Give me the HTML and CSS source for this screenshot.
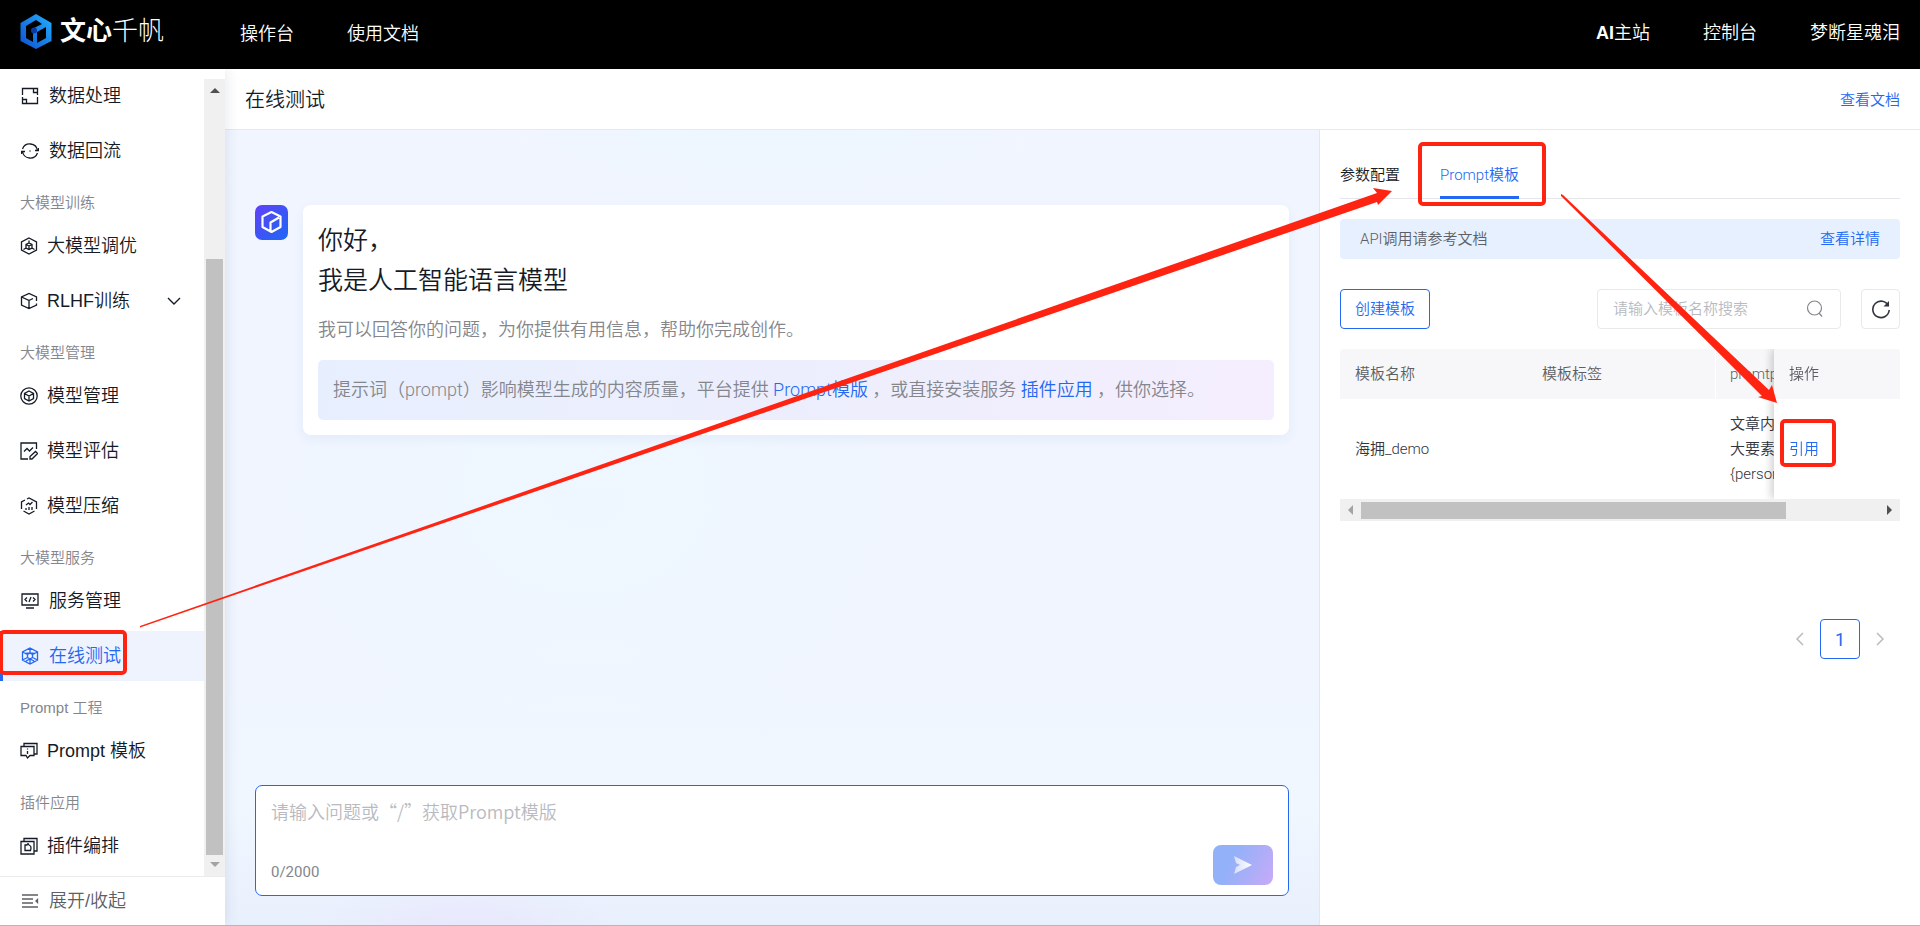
FILE: index.html
```html
<!DOCTYPE html>
<html lang="zh-CN">
<head>
<meta charset="utf-8">
<title>文心千帆 - 在线测试</title>
<link rel="stylesheet" href="styles.css">
</head>
<body>
<div class="page">
  <header class="topbar">
    <a class="brand" href="#">
      <svg class="brand-mark" width="32" height="36" viewBox="0 0 32 36">
        <defs><linearGradient id="g1" x1="1" y1="0" x2="0" y2="1"><stop offset="0" stop-color="#25b0ff"/><stop offset="1" stop-color="#0c4fd0"/></linearGradient></defs>
        <path fill="url(#g1)" fill-rule="evenodd" d="M16 0 31.500 9V27L16 35 .500 27V9ZM16 6 6 12V24L13 28V17Q13 14 16 13L22 10ZM26 13 17 18V29L26 24Z"/>
        <circle cx="14" cy="16.500" r="3" fill="#0a3aa0"/>
      </svg>
      <span class="brand-name"><b>文心</b>千帆</span>
    </a>
    <nav class="topnav"><a href="#">操作台</a><a href="#">使用文档</a></nav>
    <nav class="topnav topnav-right"><a href="#"><b>AI</b>主站</a><a href="#">控制台</a><a href="#">梦断星魂泪</a></nav>
  </header>

  <div class="body">
    <aside class="sidebar">
      <div class="side-scroll">
        <nav class="menu">
          <a class="item wide" href="#"><svg class="ico" viewBox="0 0 18 18"><path d="M12 1.500H1.500V8M1.500 10v2M6 16.500H16.500V10M16.500 8V6M12.500 1.500h4v4h-4ZM1.500 12.500h4v4h-4Z"/></svg>数据处理</a>
          <a class="item wide" href="#"><svg class="ico" viewBox="0 0 18 18"><path d="M1.500 7A7.800 7.800 0 0 1 16.500 8.500M14 8.500h3.500V6M16.500 11A7.800 7.800 0 0 1 1.500 9.500M4 9.500H.500V12M8.500 9h1"/></svg>数据回流</a>
          <h2 class="group">大模型训练</h2>
          <a class="item" href="#"><svg class="ico" viewBox="0 0 18 18"><path d="M9 1 16.500 5V13L9 17 1.500 13V5ZM9 6 12 7.500V11L9 12.500 6 11V7.500ZM6 7.500 9 9 12 7.500M9 9v3.500M9 3.500V6M6 11 3.500 12.500M12 11 14.500 12.500"/></svg>大模型调优</a>
          <a class="item" href="#"><svg class="ico" viewBox="0 0 18 18"><path d="M16.500 9V5L9 1.500 1.500 5V13L9 16.500 16.500 13V11.500M1.500 5 9 8.500V16.500M9 8.500 13 6.500"/></svg>RLHF训练<svg class="caret" viewBox="0 0 14 8"><path d="M1 1 7 7 13 1"/></svg></a>
          <h2 class="group">大模型管理</h2>
          <a class="item" href="#"><svg class="ico" viewBox="0 0 18 18"><circle cx="9" cy="9" r="8.200"/><path d="M9 4 13.500 6.500V11.500L9 14 4.500 11.500V6.500ZM4.500 6.500 9 9 13.500 6.500M9 9V14"/></svg>模型管理</a>
          <a class="item" href="#"><svg class="ico" viewBox="0 0 18 18"><path d="M8 17H1V1H16.500V7M4 9.500 7 6.500 9.500 9 13 5.500M10 17V14.500L15.500 9.500 17.500 11.500 12 17Z"/></svg>模型评估</a>
          <a class="item" href="#"><svg class="ico" viewBox="0 0 18 18"><path d="M7 2 9 1 16.500 5V12M14.500 14 9 17 3.500 14M1.500 12V5L5 3M6 13V11M9 13V10M12 13V10M6 8 8.500 6 10 7.500 12.500 5"/></svg>模型压缩</a>
          <h2 class="group">大模型服务</h2>
          <a class="item wide" href="#"><svg class="ico" viewBox="0 0 18 18"><path d="M1 2H17V13H1ZM5 16H13M6 5.500 4 7.500 6 9.500M12 5.500 14 7.500 12 9.500M10 5 8 10"/></svg>服务管理</a>
          <a class="item wide active" href="#"><svg class="ico" viewBox="0 0 18 18"><path d="M9 1 16.500 5V13L9 17 1.500 13V5ZM9 1V6M1.500 5 6.500 7.500M16.500 5 11.500 7.500M1.500 13 6.500 10.500M16.500 13 11.500 10.500M9 12V17M9 6 11.500 7.500V10.500L9 12 6.500 10.500V7.500ZM4 6.500 9 6 14 6.500M5 14 9 12 13 14"/></svg>在线测试</a>
          <h2 class="group">Prompt 工程</h2>
          <a class="item" href="#"><svg class="ico" viewBox="0 0 18 18"><path d="M4 4V1.500H17V12H14.500M1 4.500H14V13.500H10L7.500 16 6 13.500H1ZM7.500 6.500v1M7.500 9v3"/></svg>Prompt 模板</a>
          <h2 class="group">插件应用</h2>
          <a class="item" href="#"><svg class="ico" viewBox="0 0 18 18"><path d="M4 4V1.500H17V14H14.500M1 4.500H14V17H1ZM5 13.500V8H7Q8 5.500 9 8Q12 9 10.500 13.500Z"/></svg>插件编排</a>
        </nav>
        <div class="vbar"><i class="tri up"></i><div class="vthumb"></div><i class="tri down"></i></div>
      </div>
      <button class="collapse" type="button"><svg class="ico" viewBox="0 0 18 18"><path d="M1 3H17M1 7H12M1 11H12M1 15H17M16.500 7.500 15 9 16.500 10.500Z"/></svg>展开/收起</button>
    </aside>

    <main class="main">
      <div class="titlebar"><h1>在线测试</h1><a href="#">查看文档</a></div>
      <div class="content">
        <section class="chat">
          <div class="message">
            <svg class="avatar" width="33" height="35" viewBox="0 0 33 35">
              <defs><linearGradient id="g2" x1="0" y1="0" x2="1" y2="1"><stop offset="0" stop-color="#6040f8"/><stop offset="1" stop-color="#1c68f4"/></linearGradient></defs>
              <rect width="33" height="35" rx="7" fill="url(#g2)"/>
              <path d="M16.500 7 25.500 11.500V22L16.500 27 7.500 22V11.500ZM15.500 26V17.500L24 12.500" fill="none" stroke="#fff" stroke-width="2.200" stroke-linejoin="round"/>
            </svg>
            <div class="card">
              <p class="hello">你好，<br>我是人工智能语言模型</p>
              <p class="sub">我可以回答你的问题，为你提供有用信息，帮助你完成创作。</p>
              <p class="tip">提示词（prompt）影响模型生成的内容质量，平台提供 <a href="#">Prompt模版</a> ，或直接安装服务 <a href="#">插件应用</a> ，供你选择。</p>
            </div>
          </div>
          <form class="composer">
            <textarea aria-label="问题" placeholder="请输入问题或“/”获取Prompt模版"></textarea>
            <div class="composer-foot">
              <span>0/2000</span>
              <button class="send" type="button" aria-label="发送"><svg width="20" height="18" viewBox="0 0 20 18"><defs><linearGradient id="g3"><stop offset="0" stop-color="#d6defa"/><stop offset="1" stop-color="#fff"/></linearGradient></defs><path fill="url(#g3)" d="M1 0 19 9 1 18 3 11 7 9 3 7Z"/></svg></button>
            </div>
          </form>
        </section>

        <section class="panel">
          <div class="tabs" role="tablist">
            <button role="tab" type="button">参数配置</button>
            <button role="tab" type="button" class="on" aria-selected="true">Prompt模板</button>
          </div>
          <div class="notice"><span>API调用请参考文档</span><a href="#">查看详情</a></div>
          <div class="tools">
            <button class="create" type="button">创建模板</button>
            <label class="search">
              <input type="text" aria-label="模板名称" placeholder="请输入模板名称搜索">
              <svg width="18" height="18" viewBox="0 0 18 18"><circle cx="8.500" cy="8" r="7"/><path d="M13 13 16 16.500"/></svg>
            </label>
            <button class="refresh" type="button" aria-label="刷新"><svg width="20" height="20" viewBox="0 0 20 20"><path d="M17.500 7A8.200 8.200 0 1 0 18.200 11"/><path d="M18 2V7.500H12.500Z" class="solid"/></svg></button>
          </div>
          <div class="table-wrap">
            <table>
              <colgroup><col class="c1"><col class="c2"><col class="c3"><col class="c4"></colgroup>
              <thead><tr><th>模板名称</th><th>模板标签</th><th class="split">promtp</th><th class="fixed">操作</th></tr></thead>
              <tbody><tr><td>海拥_demo</td><td></td><td class="long">文章内<br>大要素<br>{person</td><td class="fixed"><a href="#">引用</a></td></tr></tbody>
            </table>
          </div>
          <div class="hbar"><i class="tri left"></i><div class="htrack"><div class="hthumb"></div></div><i class="tri right"></i></div>
          <nav class="pager" aria-label="分页">
            <button type="button" aria-label="上一页"><svg width="8" height="14" viewBox="0 0 8 14"><path d="M7 1 1 7 7 13"/></svg></button>
            <button type="button" class="current">1</button>
            <button type="button" aria-label="下一页"><svg width="8" height="14" viewBox="0 0 8 14"><path d="M1 1 7 7 1 13"/></svg></button>
          </nav>
        </section>
      </div>
    </main>
  </div>

  <svg class="marks" width="1920" height="926" viewBox="0 0 1920 926" aria-hidden="true">
    <g fill="none" stroke="#ff2412" stroke-width="4">
      <rect x="1" y="632" width="124" height="41" rx="3"/>
      <rect x="1420" y="144" width="124" height="60" rx="3"/>
      <rect x="1782" y="421" width="52" height="44" rx="3"/>
    </g>
    <g fill="#ff2412">
      <path d="M140 626 1377 193 1373 188 1392 191 1378 205 1377 202 140 627.500Z"/>
      <path d="M1561 194 1563 195 1769 390 1772 385 1777 403 1758 397 1762 396 1561 196Z"/>
    </g>
  </svg>
</div>
</body>
</html>
```
FILE: styles.css
```css
* { box-sizing: border-box; }
body {
  margin: 0;
  font-family: Roboto, "Noto Sans CJK SC", sans-serif;
  font-size: 15px;
  font-weight: 350;
  line-height: 25px;
  color: #151b26;
  background: #fff;
}
a { color: #2468f2; text-decoration: none; }
h1, h2, p { margin: 0; font-weight: inherit; }
button, input, textarea { font: inherit; color: inherit; background: none; border: 0; padding: 0; }
svg { fill: none; flex: none; display: block; }

.page {
  position: relative;
  display: flex;
  flex-direction: column;
  min-height: 100vh;
  overflow: hidden;
  border-bottom: 1px solid #b4b8be;
}

.topbar {
  display: flex;
  align-items: center;
  height: 69px;
  padding: 0 20px;
  background: #000;
  font-size: 18px;
}
.brand { display: flex; align-items: center; gap: 8px; width: 220px; padding-bottom: 6px; }
.brand-name { padding-bottom: 2px; color: #fff; font-size: 26px; line-height: 30px; font-weight: 300; }
.brand-name b { font-weight: 700; }
.topnav { display: flex; gap: 53px; padding-bottom: 3px; }
.topnav a { color: #fff; }
.topnav-right { margin-left: auto; }
.topnav b { font-family: "Liberation Sans", sans-serif; }

.body { flex: 1; display: flex; }

.sidebar {
  position: relative;
  z-index: 1;
  display: flex;
  flex-direction: column;
  width: 225px;
  flex: none;
  background: #fff;
  box-shadow: 0 0 14px rgba(20, 40, 90, .12);
  clip-path: inset(0 -20px 0 0);
  font-family: "Liberation Sans", "Noto Sans CJK SC", sans-serif;
  font-size: 18px;
}
.side-scroll { flex: 1; display: flex; }
.menu { flex: 1; display: flex; flex-direction: column; gap: 5px; padding: 2px 0 5px; }
.item { display: flex; align-items: center; gap: 9px; height: 50px; padding: 0 23px 0 20px; color: #151b26; }
.item.wide { gap: 10px; padding-left: 21px; }
.item.active { color: #2468f2; background: #eef3fe; box-shadow: inset 3px 0 #2468f2; }
.group { height: 35px; padding: 9px 20px 0; font-size: 15px; color: #84868c; }
.ico { width: 18px; height: 18px; stroke: currentColor; stroke-width: 1.3; }
.caret { width: 14px; height: 8px; margin-left: auto; stroke: currentColor; stroke-width: 1.4; }
.collapse {
  display: flex;
  align-items: center;
  gap: 10px;
  height: 49px;
  padding: 0 21px;
  border-top: 1px solid #ebecee;
  color: #5c5f66;
}

.vbar { display: flex; flex-direction: column; align-items: center; justify-content: space-between; width: 21px; margin-top: 10px; padding: 9px 0; background: #f0f0f0; }
.vthumb { width: 17px; flex: 1; margin: 166px 0 7px; background: #c1c1c1; }
.tri { border: 5px solid transparent; width: 0; height: 0; flex: none; }
.tri.up { border-top: 0; border-bottom-color: #505050; }
.tri.down { border-bottom: 0; border-top-color: #a3a3a3; }
.tri.left { border-left: 0; border-right-color: #a3a3a3; }
.tri.right { border-right: 0; border-left-color: #505050; }

.main { flex: 1; min-width: 0; display: flex; flex-direction: column; }
.titlebar {
  display: flex;
  align-items: center;
  justify-content: space-between;
  height: 61px;
  padding: 2px 20px 0;
  border-bottom: 1px solid #e8e9eb;
}
.titlebar h1 { font-size: 20px; }
.content { flex: 1; display: flex; }

.chat {
  flex: 1;
  display: flex;
  flex-direction: column;
  justify-content: space-between;
  padding: 75px 30px 29px;
  background:
    radial-gradient(320px 260px at 33% 46%, rgba(236, 249, 255, .5), transparent),
    radial-gradient(300px 80px at 50% 0, rgba(234, 248, 255, .6), transparent),
    radial-gradient(160px 50px at 22% 100%, rgba(232, 230, 252, .8), transparent),
    linear-gradient(#f1f5ff 0, #f0f5ff 60%, #f0f7ff 85%, #e9f0fd);
}
.message { display: flex; gap: 15px; }
.card { flex: 1; padding: 16px 15px 15px; border-radius: 8px; background: #fff; box-shadow: 0 4px 12px rgba(40, 80, 160, .06); }
.hello { font-size: 25px; line-height: 40px; }
.sub { margin: 14px 0 15px; font-size: 18px; line-height: 30px; color: #84868c; }
.tip {
  padding: 15px;
  border-radius: 5px;
  font-size: 18px;
  line-height: 30px;
  color: #84868c;
  background: linear-gradient(100deg, #e7effe, #edeefd 50%, #f5eefe);
}

.composer { display: flex; flex-direction: column; height: 111px; padding: 10px 15px; border: 1px solid #2468f2; border-radius: 7px; background: #fff; }
.composer textarea { flex: 1; min-height: 0; resize: none; outline: 0; font-family: "Noto Sans CJK SC", sans-serif; font-size: 18px; line-height: 30px; overflow: hidden; }
::placeholder { color: #b8babf; opacity: 1; }
.composer-foot { display: flex; justify-content: space-between; align-items: flex-end; color: #84868c; }
.composer-foot span { font-weight: 400; }
.send {
  display: grid;
  place-items: center;
  width: 60px;
  height: 40px;
  border-radius: 8px;
  background: linear-gradient(115deg, #92b1f9 30%, #a8aef7 60%, #c8aaf8);
}

.panel { width: 601px; padding: 20px; border-left: 1px solid #e4e6eb; }
.tabs { display: flex; gap: 40px; height: 49px; border-bottom: 1px solid #e4e6eb; }
.tabs button { height: 49px; padding-top: 4px; border-bottom: 3px solid transparent; }
.tabs .on { color: #2468f2; border-color: #2468f2; }
.notice {
  display: flex;
  align-items: center;
  justify-content: space-between;
  height: 40px;
  margin: 20px 0 30px;
  padding: 0 20px;
  border-radius: 4px;
  background: #e6f0ff;
  color: #5c5f66;
}
.tools { display: flex; gap: 20px; margin-bottom: 20px; }
.tools > * { height: 40px; border: 1px solid #e8e9eb; border-radius: 4px; }
.tools .create { width: 90px; margin-right: auto; color: #2468f2; border-color: #2468f2; }
.search { display: flex; align-items: center; width: 244px; padding: 0 16px 0 15px; }
.search input { flex: 1; min-width: 0; outline: 0; }
.search svg { stroke: #84868c; stroke-width: 1.2; }
.refresh { display: grid; place-items: center; width: 39px; }
.refresh svg { stroke: #303540; stroke-width: 1.6; }
.refresh .solid { fill: #303540; stroke: none; }

.table-wrap { overflow: hidden; border-radius: 4px 4px 0 0; }
table { width: 688px; table-layout: fixed; border-collapse: separate; border-spacing: 0; }
.c1, .c3 { width: 187px; }
.c2 { width: 188px; }
.c4 { width: 126px; }
th, td { padding: 0 15px; text-align: left; font-weight: inherit; }
th { height: 50px; background: #f7f7f9; color: #5c5f66; }
th.split { border-left: 1px solid #fff; padding-left: 14px; }
td { height: 100px; background: #fff; color: #303540; }
td.long { white-space: nowrap; }
.fixed { position: sticky; right: 0; box-shadow: -3px 0 8px rgba(0, 0, 0, .18); clip-path: inset(0 0 0 -12px); }

.hbar { display: flex; align-items: center; height: 22px; padding: 0 8px; background: #f0f0f0; }
.htrack { flex: 1; padding: 0 8px; }
.hthumb { width: 82%; height: 17px; background: #c1c1c1; }

.pager { display: flex; justify-content: flex-end; align-items: center; margin-top: 98px; }
.pager svg { stroke: #b8babf; stroke-width: 1.5; margin: 0 16px; }
.pager .current { width: 40px; height: 40px; border: 1px solid #2468f2; border-radius: 4px; color: #2468f2; font-size: 18px; font-weight: 400; }

.marks { position: absolute; left: 0; top: 0; pointer-events: none; z-index: 2; }
```
